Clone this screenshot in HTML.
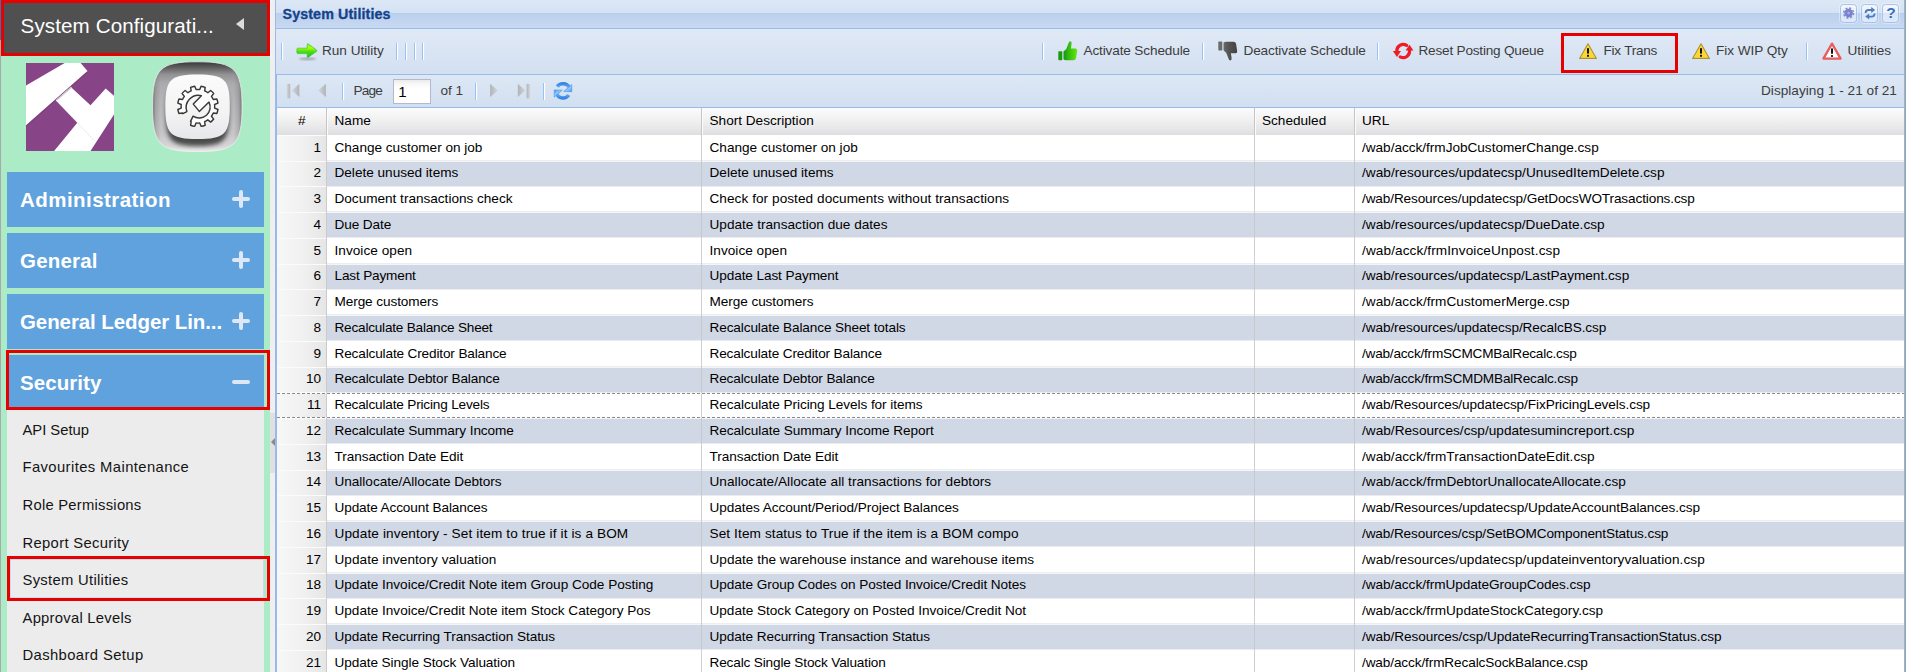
<!DOCTYPE html>
<html><head><meta charset="utf-8"><title>System Utilities</title>
<style>
*{box-sizing:border-box;margin:0;padding:0}
html,body{width:1906px;height:672px;overflow:hidden;background:#fff;font-family:"Liberation Sans",sans-serif}
#wrap{position:absolute;left:0;top:0;width:1906px;height:672px;overflow:hidden}
.abs{position:absolute}
/* ---------- sidebar ---------- */
#side{position:absolute;left:0;top:0;width:270px;height:672px;background:#abebc6}
#sideL{position:absolute;left:0;top:0;width:1px;height:672px;background:#a9a9a9}
#shead{position:absolute;left:1px;top:0;width:269px;height:56px;background:#505050;border:3px solid #e60000}
#shead .t{position:absolute;left:16.6px;top:10.5px;font-size:20.6px;color:#fff;white-space:nowrap;letter-spacing:0.1px}
#shead .arr{position:absolute;left:232px;top:15px;width:0;height:0;border-top:6.5px solid transparent;border-bottom:6.5px solid transparent;border-right:8.5px solid #dcdcdc}
.acc{position:absolute;left:7px;width:257px;height:55px;background:#5fa2dd;color:#fff;font-weight:bold;font-size:20.5px;white-space:nowrap}
.acc .t{position:absolute;left:13px;top:16px}
.acc .pl{position:absolute;left:225px;top:18px;width:18px;height:18px}
.acc .pl:before{content:"";position:absolute;left:0;top:7px;width:18px;height:4px;background:#dde7f5;border-radius:2px}
.acc .pl.p:after{content:"";position:absolute;left:7px;top:0;width:4px;height:17.5px;background:#dde7f5;border-radius:2px}
#sub{position:absolute;left:7px;top:410px;width:257px;height:262px;background:#ececec}
.mi{position:absolute;left:22.5px;height:37.5px;line-height:37.5px;font-size:14.8px;color:#141414;white-space:nowrap}
.redbox{position:absolute;border:3px solid #e60000}
/* ---------- splitter ---------- */
#split{position:absolute;left:270px;top:0;width:5px;height:672px;background:#efefef}
#mini{position:absolute;left:270px;top:413px;width:5px;height:60px;background:#e0e0e0}
#mini:after{content:"";position:absolute;left:0.5px;top:25px;width:0;height:0;border-top:4.5px solid transparent;border-bottom:4.5px solid transparent;border-right:4.5px solid #8a8a8a}
/* ---------- main panel ---------- */
#main{position:absolute;left:275px;top:0;width:1630px;height:672px;background:#fff}
#phead{position:absolute;left:276px;top:0;width:1628px;height:29px;background:linear-gradient(#dde8f6 0,#d4e2f4 12.5px,#b7cdec 13px,#bcd1ee 14.5px,#c8d9f1 28px);border-bottom:1px solid #99bbe8}
#phead .t{position:absolute;left:6.5px;top:6px;font-size:14.3px;font-weight:bold;color:#15428b;-webkit-text-stroke:.3px #15428b;white-space:nowrap;letter-spacing:0.1px}
.tool{position:absolute;top:4px;width:17.5px;height:18.5px;border:1px solid #a6c3ec;border-radius:3.5px;background:linear-gradient(#f3f7fd 0,#ecf2fb 48%,#dbe7f8 50%,#dfe9f8 100%);box-shadow:0 0 0 1px rgba(255,255,255,.35)}
#tbar{position:absolute;left:276px;top:29px;width:1628px;height:45.5px;background:linear-gradient(#e0e9f6,#d3e0f1);border-bottom:1px solid #99bbe8}
#pbar{position:absolute;left:276px;top:74.5px;width:1628px;height:33px;background:linear-gradient(#dee8f5,#d1dff0);border-bottom:1px solid #99bbe8}
.tt{position:absolute;font-size:13.6px;color:#3c3c3c;white-space:nowrap;line-height:16px}
.sep{position:absolute;width:3px;height:17px;background:linear-gradient(90deg,#96c2f7 0,#96c2f7 1px,#fff 1px,#fff 2px,rgba(255,255,255,.12) 2px)}
#ghead{position:absolute;left:277px;top:107.5px;width:1627px;height:27.5px;background:linear-gradient(#fbfbfb 0,#f2f2f3 40%,#e6e6e8 80%,#dededf 100%)}
#ghead span{position:absolute;top:5px;font-size:13.6px;color:#000;white-space:nowrap;line-height:16px}
.hsep{position:absolute;top:0;width:1px;height:27px;background:#c6c6c6;box-shadow:1px 0 0 #fbfbfb}
.row{position:absolute;left:277px;width:1627px;height:25.75px;font-size:13.6px;color:#000;white-space:nowrap}
.row .nbg{position:absolute;left:0;top:0;width:49.5px;height:26px;background:linear-gradient(90deg,#f7f7f7 0,#f0f0f0 55%,#e5e5e5 100%);border-top:1.2px solid #fbfbfb}
.band{position:absolute;left:326.5px;width:1577.5px;height:24px;background:#d0d7e5;box-shadow:0 -1px 0 #f4f5f8,0 -2px 0 #ededed,0 1px 0 #ececf0}
.dash{position:absolute;left:277px;width:1627px;height:1px;background:repeating-linear-gradient(90deg,#8a8a8a 0,#8a8a8a 3px,rgba(255,255,255,.6) 3px,rgba(255,255,255,.6) 5px);z-index:3}
.c{position:absolute;top:5px;line-height:16px}
.num{left:0;width:44px;text-align:right}
.nm{left:57.5px}.ds{left:432.5px}.ur{left:1085px}
#numcol{position:absolute;left:277px;top:135px;width:49.5px;height:537px;background:linear-gradient(90deg,#f6f6f6 0,#efefef 60%,#e4e4e4 100%)}
.vsep{position:absolute;top:135px;width:1px;height:537px;background:rgba(196,196,196,.8);z-index:2}
</style></head>
<body><div id="wrap">

<!-- main panel -->
<div id="main"></div><div class="abs" style="left:275px;top:0;width:1px;height:672px;background:#97baea"></div><div class="abs" style="left:276px;top:74px;width:1px;height:598px;background:#97baea;z-index:4"></div><div class="abs" style="left:1904px;top:0;width:1px;height:672px;background:#8fb3e4;z-index:4"></div><div class="abs" style="left:1905px;top:0;width:1px;height:672px;background:#a3a3a3"></div>
<div id="phead"><span class="t">System Utilities</span>
 <div class="tool" style="left:1563.5px;width:17px"><svg width="17" height="18" viewBox="0 0 17 18" style="position:absolute;left:-1px;top:-1px"><circle cx="8.6" cy="9" r="4.9" fill="none" stroke="#8088d2" stroke-width="1.6" stroke-dasharray="2 1.85"/><circle cx="8.6" cy="9" r="4.3" fill="#7b83cf"/><circle cx="8.6" cy="9" r="1.2" fill="#aab0e4"/></svg></div><div class="tool" style="left:1584.5px;width:17.7px"><svg width="18" height="18" viewBox="0 0 18 18" style="position:absolute;left:-1px;top:-1px"><g fill="none" stroke="#4b7cc2" stroke-width="1.9"><path d="M4.6 9 Q4.6 6 7.6 6 L11 6"/><path d="M13.6 9.4 Q13.6 12.6 10.6 12.6 L7.4 12.6"/></g><path d="M10.2 3 L14.2 6 L10.2 9Z" fill="#4b7cc2"/><path d="M8.2 9.6 L4.2 12.6 L8.2 15.6Z" fill="#4b7cc2"/></svg></div><div class="tool" style="left:1605.8px;width:17.6px"><span style="position:absolute;left:3.4px;top:-0.8px;font-size:15.5px;font-weight:bold;color:#3b6ebe;line-height:17px">?</span></div>
</div>
<div id="tbar"></div>
<div id="pbar"></div>
<div id="ghead">
 <span style="left:21px">#</span><span style="left:57.5px">Name</span><span style="left:432.5px">Short Description</span><span style="left:985px">Scheduled</span><span style="left:1085px">URL</span>
 <div class="hsep" style="left:49px"></div><div class="hsep" style="left:424px"></div><div class="hsep" style="left:977px"></div><div class="hsep" style="left:1077px"></div>
</div>
<div id="numcol"></div>
<div class="row" style="top:135px"><div class="nbg" style="top:0px"></div><span class="c num">1</span><span class="c nm" style="letter-spacing:-0.01px">Change customer on job</span><span class="c ds" style="letter-spacing:0.008px">Change customer on job</span><span class="c ur" style="letter-spacing:-0.016px">/wab/acck/frmJobCustomerChange.csp</span></div>
<div class="band" style="top:162px"></div>
<div class="row" style="top:160px"><div class="nbg" style="top:1px"></div><span class="c num">2</span><span class="c nm" style="letter-spacing:-0.007px">Delete unused items</span><span class="c ds" style="letter-spacing:0.009px">Delete unused items</span><span class="c ur" style="letter-spacing:0.058px">/wab/resources/updatecsp/UnusedItemDelete.csp</span></div>
<div class="row" style="top:186px"><div class="nbg" style="top:0px"></div><span class="c num">3</span><span class="c nm" style="letter-spacing:-0.012px">Document transactions check</span><span class="c ds" style="letter-spacing:0.058px">Check for posted documents without transactions</span><span class="c ur" style="letter-spacing:-0.123px">/wab/Resources/updatecsp/GetDocsWOTrasactions.csp</span></div>
<div class="band" style="top:213px"></div>
<div class="row" style="top:212px"><div class="nbg" style="top:0px"></div><span class="c num">4</span><span class="c nm" style="letter-spacing:-0.092px">Due Date</span><span class="c ds" style="letter-spacing:0.014px">Update transaction due dates</span><span class="c ur" style="letter-spacing:0.046px">/wab/resources/updatecsp/DueDate.csp</span></div>
<div class="row" style="top:238px"><div class="nbg" style="top:0px"></div><span class="c num">5</span><span class="c nm" style="letter-spacing:0.042px">Invoice open</span><span class="c ds" style="letter-spacing:0.034px">Invoice open</span><span class="c ur" style="letter-spacing:0.106px">/wab/acck/frmInvoiceUnpost.csp</span></div>
<div class="band" style="top:265px"></div>
<div class="row" style="top:263px"><div class="nbg" style="top:1px"></div><span class="c num">6</span><span class="c nm" style="letter-spacing:-0.16px">Last Payment</span><span class="c ds" style="letter-spacing:-0.091px">Update Last Payment</span><span class="c ur" style="letter-spacing:0.012px">/wab/resources/updatecsp/LastPayment.csp</span></div>
<div class="row" style="top:289px"><div class="nbg" style="top:0px"></div><span class="c num">7</span><span class="c nm" style="letter-spacing:-0.088px">Merge customers</span><span class="c ds" style="letter-spacing:-0.068px">Merge customers</span><span class="c ur" style="letter-spacing:0.049px">/wab/acck/frmCustomerMerge.csp</span></div>
<div class="band" style="top:316px"></div>
<div class="row" style="top:315px"><div class="nbg" style="top:0px"></div><span class="c num">8</span><span class="c nm" style="letter-spacing:-0.213px">Recalculate Balance Sheet</span><span class="c ds" style="letter-spacing:-0.109px">Recalculate Balance Sheet totals</span><span class="c ur" style="letter-spacing:-0.075px">/wab/resources/updatecsp/RecalcBS.csp</span></div>
<div class="row" style="top:341px"><div class="nbg" style="top:0px"></div><span class="c num">9</span><span class="c nm" style="letter-spacing:-0.145px">Recalculate Creditor Balance</span><span class="c ds" style="letter-spacing:-0.134px">Recalculate Creditor Balance</span><span class="c ur" style="letter-spacing:-0.217px">/wab/acck/frmSCMCMBalRecalc.csp</span></div>
<div class="band" style="top:368px"></div>
<div class="row" style="top:366px"><div class="nbg" style="top:1px"></div><span class="c num">10</span><span class="c nm" style="letter-spacing:-0.128px">Recalculate Debtor Balance</span><span class="c ds" style="letter-spacing:-0.131px">Recalculate Debtor Balance</span><span class="c ur" style="letter-spacing:-0.178px">/wab/acck/frmSCMDMBalRecalc.csp</span></div>
<div class="row" style="top:392px"><div class="nbg" style="top:0px"></div><span class="c num">11</span><span class="c nm" style="letter-spacing:-0.171px">Recalculate Pricing Levels</span><span class="c ds" style="letter-spacing:-0.067px">Recalculate Pricing Levels for items</span><span class="c ur" style="letter-spacing:-0.079px">/wab/Resources/updatecsp/FixPricingLevels.csp</span></div>
<div class="band" style="top:419px"></div>
<div class="row" style="top:418px"><div class="nbg" style="top:0px"></div><span class="c num">12</span><span class="c nm" style="letter-spacing:-0.078px">Recalculate Summary Income</span><span class="c ds" style="letter-spacing:-0.052px">Recalculate Summary Income Report</span><span class="c ur" style="letter-spacing:0.028px">/wab/Resources/csp/updatesumincreport.csp</span></div>
<div class="row" style="top:444px"><div class="nbg" style="top:0px"></div><span class="c num">13</span><span class="c nm" style="letter-spacing:-0.072px">Transaction Date Edit</span><span class="c ds" style="letter-spacing:-0.072px">Transaction Date Edit</span><span class="c ur" style="letter-spacing:0.035px">/wab/acck/frmTransactionDateEdit.csp</span></div>
<div class="band" style="top:471px"></div>
<div class="row" style="top:469px"><div class="nbg" style="top:1px"></div><span class="c num">14</span><span class="c nm" style="letter-spacing:-0.024px">Unallocate/Allocate Debtors</span><span class="c ds" style="letter-spacing:0.044px">Unallocate/Allocate all transactions for debtors</span><span class="c ur" style="letter-spacing:0.042px">/wab/acck/frmDebtorUnallocateAllocate.csp</span></div>
<div class="row" style="top:495px"><div class="nbg" style="top:0px"></div><span class="c num">15</span><span class="c nm" style="letter-spacing:-0.117px">Update Account Balances</span><span class="c ds" style="letter-spacing:-0.06px">Updates Account/Period/Project Balances</span><span class="c ur" style="letter-spacing:-0.073px">/wab/Resources/updatecsp/UpdateAccountBalances.csp</span></div>
<div class="band" style="top:522px"></div>
<div class="row" style="top:521px"><div class="nbg" style="top:0px"></div><span class="c num">16</span><span class="c nm" style="letter-spacing:0.119px">Update inventory - Set item to true if it is a BOM</span><span class="c ds" style="letter-spacing:0.11px">Set Item status to True if the item is a BOM compo</span><span class="c ur" style="letter-spacing:-0.114px">/wab/Resources/csp/SetBOMComponentStatus.csp</span></div>
<div class="row" style="top:547px"><div class="nbg" style="top:0px"></div><span class="c num">17</span><span class="c nm" style="letter-spacing:0.036px">Update inventory valuation</span><span class="c ds" style="letter-spacing:0.008px">Update the warehouse instance and warehouse items</span><span class="c ur" style="letter-spacing:0.08px">/wab/resources/updatecsp/updateinventoryvaluation.csp</span></div>
<div class="band" style="top:574px"></div>
<div class="row" style="top:572px"><div class="nbg" style="top:1px"></div><span class="c num">18</span><span class="c nm" style="letter-spacing:-0.015px">Update Invoice/Credit Note item Group Code Posting</span><span class="c ds" style="letter-spacing:-0.064px">Update Group Codes on Posted Invoice/Credit Notes</span><span class="c ur" style="letter-spacing:-0.033px">/wab/acck/frmUpdateGroupCodes.csp</span></div>
<div class="row" style="top:598px"><div class="nbg" style="top:0px"></div><span class="c num">19</span><span class="c nm" style="letter-spacing:-0.01px">Update Invoice/Credit Note item Stock Category Pos</span><span class="c ds" style="letter-spacing:-0.017px">Update Stock Category on Posted Invoice/Credit Not</span><span class="c ur" style="letter-spacing:0.012px">/wab/acck/frmUpdateStockCategory.csp</span></div>
<div class="band" style="top:625px"></div>
<div class="row" style="top:624px"><div class="nbg" style="top:0px"></div><span class="c num">20</span><span class="c nm" style="letter-spacing:-0.066px">Update Recurring Transaction Status</span><span class="c ds" style="letter-spacing:-0.066px">Update Recurring Transaction Status</span><span class="c ur" style="letter-spacing:-0.064px">/wab/Resources/csp/UpdateRecurringTransactionStatus.csp</span></div>
<div class="row" style="top:650px"><div class="nbg" style="top:0px"></div><span class="c num">21</span><span class="c nm" style="letter-spacing:-0.074px">Update Single Stock Valuation</span><span class="c ds" style="letter-spacing:-0.146px">Recalc Single Stock Valuation</span><span class="c ur" style="letter-spacing:-0.114px">/wab/acck/frmRecalcSockBalance.csp</span></div>
<div class="dash" style="top:393px"></div><div class="dash" style="top:417px"></div>
<div class="vsep" style="left:326px"></div><div class="vsep" style="left:701px"></div><div class="vsep" style="left:1254px"></div><div class="vsep" style="left:1354px"></div>

<!-- toolbar items -->
<div class="sep" style="left:281px;top:43px"></div>
<div class="tt" style="left:322px;top:43px;letter-spacing:-0.02px">Run Utility</div>
<div class="sep" style="left:396px;top:43px"></div><div class="sep" style="left:405px;top:43px"></div><div class="sep" style="left:414px;top:43px"></div><div class="sep" style="left:422px;top:43px"></div>
<div class="sep" style="left:1042px;top:43px"></div>
<div class="tt" style="left:1083.5px;top:43px;letter-spacing:-0.14px">Activate Schedule</div>
<div class="sep" style="left:1202px;top:43px"></div>
<div class="tt" style="left:1243.5px;top:43px;letter-spacing:-0.13px">Deactivate Schedule</div>
<div class="sep" style="left:1377px;top:43px"></div>
<div class="tt" style="left:1418.5px;top:43px;letter-spacing:-0.21px">Reset Posting Queue</div>
<div class="tt" style="left:1603.5px;top:43px;letter-spacing:-0.25px">Fix Trans</div>
<div class="tt" style="left:1716px;top:43px;letter-spacing:-0.04px">Fix WIP Qty</div>
<div class="sep" style="left:1806px;top:43px"></div>
<div class="tt" style="left:1847.5px;top:43px;letter-spacing:-0.03px">Utilities</div>
<div class="redbox" style="left:1561px;top:33px;width:117px;height:40px"></div>

<!-- run utility arrow -->
<svg class="abs" style="left:296px;top:42px" width="23" height="19" viewBox="0 0 23 19">
<defs><linearGradient id="ga" x1="0" y1="0" x2="0" y2="1"><stop offset="0" stop-color="#7cf21a"/><stop offset=".3" stop-color="#b0ff00"/><stop offset=".55" stop-color="#4fe018"/><stop offset="1" stop-color="#22bb22"/></linearGradient>
<filter id="gab"><feGaussianBlur stdDeviation="0.8"/></filter></defs>
<ellipse cx="11.5" cy="16.8" rx="8.5" ry="1.1" fill="#555" opacity=".55" filter="url(#gab)"/>
<path d="M1.6 6.2 L11.2 6.2 L11.2 2.2 Q11.6 1.4 12.4 2 L20.6 8 Q21.2 8.7 20.6 9.3 L12.4 15.2 Q11.5 15.7 11.2 15 L11.2 11.6 L1.6 11.6 Q0.9 11.4 0.9 10.7 L0.9 7.1 Q0.9 6.4 1.6 6.2Z" fill="url(#ga)" stroke="#35c935" stroke-width=".7"/>
</svg>
<!-- thumbs up -->
<svg class="abs" style="left:1058px;top:41px" width="20" height="20" viewBox="0 0 20 20">
<defs><linearGradient id="gu" x1="0" y1="0" x2="1" y2="0"><stop offset="0" stop-color="#16960f"/><stop offset=".35" stop-color="#2fba12"/><stop offset="1" stop-color="#66e612"/></linearGradient></defs>
<rect x=".3" y="10.2" width="4" height="9" rx=".8" fill="#1a9a10"/>
<path d="M5.5 10.6 L8.3 8 L10.4 2.6 Q10.9 .3 12.3 .3 Q13.9 .6 13.6 2.8 L12.9 7.6 L17.6 7.6 Q19.5 7.9 19.2 9.7 L18 17.3 Q17.5 19.2 15.6 19.2 L8.2 19.2 Q6.5 19 5.5 18.2Z" fill="url(#gu)"/>
</svg>
<!-- thumbs down -->
<svg class="abs" style="left:1218px;top:41px" width="20" height="20" viewBox="0 0 20 20">
<defs><linearGradient id="gd" x1="0" y1="0" x2="1" y2="0"><stop offset="0" stop-color="#6a6a6a"/><stop offset=".35" stop-color="#555"/><stop offset="1" stop-color="#444"/></linearGradient></defs>
<g transform="translate(0,19.9) scale(1,-1)">
<rect x=".3" y="10.4" width="4" height="9" rx=".8" fill="#6b6b6b"/>
<path d="M5.5 10.6 L8.3 8 L10.4 2.6 Q10.9 .3 12.3 .3 Q13.9 .6 13.6 2.8 L12.9 7.6 L17.6 7.6 Q19.5 7.9 19.2 9.7 L18 17.3 Q17.5 19.2 15.6 19.2 L8.2 19.2 Q6.5 19 5.5 18.2Z" fill="url(#gd)"/>
</g></svg>
<!-- reset (red arrows) -->
<svg class="abs" style="left:1392px;top:42px" width="22" height="18" viewBox="0 0 22 18">
<g fill="none" stroke="#ee1c25" stroke-width="3.2" stroke-linecap="round">
<path d="M14.6 3.3 A6.4 6.4 0 0 0 4.9 9.4"/>
<path d="M8.2 14.9 A6.4 6.4 0 0 0 17.5 8.4"/>
</g>
<path d="M0.9 9 L9 9 L5 14.9Z" fill="#ee1c25"/>
<path d="M13.5 8.6 L21.5 8.6 L17.5 2.7Z" fill="#ee1c25"/>
</svg>
<!-- warnings -->
<svg class="abs" style="left:1578px;top:42px" width="20" height="18" viewBox="0 0 20 18"><path d="M10 1.8 L18.4 16.4 L1.6 16.4Z" fill="#fdd22a" stroke="#a8923a" stroke-width="1.1" stroke-linejoin="round"/><path d="M10 3.4 L17 15.6 L3 15.6Z" fill="#ffdb3c" opacity=".6"/><rect x="9" y="6" width="2" height="5.8" rx=".8" fill="#111"/><rect x="9" y="12.8" width="2" height="2" rx=".6" fill="#111"/></svg>
<svg class="abs" style="left:1691px;top:42px" width="20" height="18" viewBox="0 0 20 18"><path d="M10 1.8 L18.4 16.4 L1.6 16.4Z" fill="#fdd22a" stroke="#a8923a" stroke-width="1.1" stroke-linejoin="round"/><path d="M10 3.4 L17 15.6 L3 15.6Z" fill="#ffdb3c" opacity=".6"/><rect x="9" y="6" width="2" height="5.8" rx=".8" fill="#111"/><rect x="9" y="12.8" width="2" height="2" rx=".6" fill="#111"/></svg>
<svg class="abs" style="left:1821px;top:41px" width="22" height="20" viewBox="0 0 22 20">
<path d="M11 2.6 L19.6 17.6 L2.4 17.6Z" fill="#fff" stroke="#e85c5c" stroke-width="2.3" stroke-linejoin="round"/>
<rect x="10" y="7.3" width="2" height="5.6" rx=".8" fill="#111"/><rect x="10" y="14" width="2" height="1.9" rx=".6" fill="#111"/>
</svg>

<!-- paging icons -->
<svg class="abs" style="left:286px;top:83px" width="15" height="16" viewBox="0 0 15 16">
<defs><linearGradient id="gp" x1="0" y1="0" x2="1" y2="0"><stop offset="0" stop-color="#d3d6da"/><stop offset="1" stop-color="#b0b3b7"/></linearGradient>
<linearGradient id="gp2" x1="1" y1="0" x2="0" y2="0"><stop offset="0" stop-color="#d3d6da"/><stop offset="1" stop-color="#b0b3b7"/></linearGradient></defs>
<rect x=".8" y=".9" width="3.4" height="14.5" fill="url(#gp)"/><path d="M13.4 .7 L13.4 14.1 L5.9 7.4Z" fill="url(#gp)"/></svg>
<svg class="abs" style="left:317px;top:83px" width="10" height="16" viewBox="0 0 10 16"><path d="M8.9 .7 L8.9 14.1 L1.2 7.4Z" fill="url(#gp)"/></svg>
<svg class="abs" style="left:489px;top:83px" width="10" height="16" viewBox="0 0 10 16"><path d="M1.1 .7 L1.1 14.1 L8.9 7.4Z" fill="url(#gp2)"/></svg>
<svg class="abs" style="left:517px;top:83px" width="15" height="16" viewBox="0 0 15 16"><path d="M.8 .7 L.8 14.1 L8.4 7.4Z" fill="url(#gp2)"/><rect x="9.6" y=".9" width="3.4" height="14.5" fill="url(#gp2)"/></svg>
<!-- refresh -->
<svg class="abs" style="left:548px;top:76px" width="32" height="30" viewBox="0 0 32 30">
<defs><linearGradient id="gr" x1="0" y1="0" x2="0" y2="1"><stop offset="0" stop-color="#3585e4"/><stop offset="1" stop-color="#63acf4"/></linearGradient>
<linearGradient id="gr2" x1="0" y1="1" x2="0" y2="0"><stop offset="0" stop-color="#3585e4"/><stop offset="1" stop-color="#63acf4"/></linearGradient>
<linearGradient id="gr3" x1="0" y1="0" x2="1" y2="1"><stop offset="0" stop-color="#2f7fe2"/><stop offset=".6" stop-color="#8fc6fb"/><stop offset="1" stop-color="#4a96ec"/></linearGradient>
<linearGradient id="gr4" x1="1" y1="1" x2="0" y2="0"><stop offset="0" stop-color="#2f7fe2"/><stop offset=".6" stop-color="#8fc6fb"/><stop offset="1" stop-color="#4a96ec"/></linearGradient></defs>
<path d="M9.2 10.6 A7.2 7.2 0 0 1 21.2 11.2" fill="none" stroke="url(#gr)" stroke-width="3.5"/>
<path d="M20.8 19 A7.2 7.2 0 0 1 8.8 18.4" fill="none" stroke="url(#gr2)" stroke-width="3.5"/>
<path d="M23.8 8.6 L23.8 15.7 L15.6 15.5Z" fill="url(#gr3)" stroke="#3a8ae8" stroke-width=".5"/>
<path d="M6.2 21.2 L6.2 13.9 L14.4 14.1Z" fill="url(#gr4)" stroke="#3a8ae8" stroke-width=".5"/>
</svg>

<!-- paging -->
<div class="sep" style="left:342px;top:83px"></div>
<div class="tt" style="left:353.5px;top:83px;letter-spacing:-0.84px">Page</div>
<div class="abs" style="left:393px;top:79px;width:38px;height:24.5px;background:linear-gradient(#ebebeb 0,#f8f8f8 4px,#fff 9px);border:1px solid #b5b8c8"></div>
<div class="tt" style="left:398.3px;top:83px;color:#000;font-size:15px;line-height:17px">1</div>
<div class="tt" style="left:440.5px;top:83px">of 1</div>
<div class="sep" style="left:475px;top:83px"></div>
<div class="sep" style="left:543px;top:83px"></div>
<div class="tt" style="left:1761px;top:83px;letter-spacing:0.03px">Displaying 1 - 21 of 21</div>

<!-- splitter -->
<div id="split"></div><div class="abs" style="left:270px;top:0;width:1px;height:57px;background:#f8fdfd"></div><div id="mini"></div>

<!-- sidebar -->
<div id="side">
 <div id="sideL"></div><div class="abs" style="left:0;top:0;width:1px;height:40px;background:#2d76b4"></div>
<svg class="abs" style="left:0;top:0" width="270" height="170" viewBox="0 0 270 170">
<defs>
<linearGradient id="gbO" x1="0" y1="0" x2="0" y2="1"><stop offset="0" stop-color="#383838"/><stop offset=".06" stop-color="#5c5c5c"/><stop offset=".14" stop-color="#929295"/><stop offset=".24" stop-color="#ababae"/><stop offset=".5" stop-color="#b9b9bc"/><stop offset=".8" stop-color="#c6c6c8"/><stop offset=".94" stop-color="#d6d6d8"/><stop offset="1" stop-color="#ececec"/></linearGradient>
<linearGradient id="gbS" x1="0" y1="0" x2="1" y2="0"><stop offset="0" stop-color="#2a2a2a" stop-opacity=".5"/><stop offset=".035" stop-color="#2a2a2a" stop-opacity=".15"/><stop offset=".09" stop-color="#2a2a2a" stop-opacity="0"/><stop offset=".91" stop-color="#2a2a2a" stop-opacity="0"/><stop offset=".965" stop-color="#2a2a2a" stop-opacity=".15"/><stop offset="1" stop-color="#2a2a2a" stop-opacity=".5"/></linearGradient>
<linearGradient id="gbI" x1="0" y1="0" x2="0" y2="1"><stop offset="0" stop-color="#fcfbfc"/><stop offset=".6" stop-color="#f3f3f4"/><stop offset="1" stop-color="#e6e7e9"/></linearGradient>
<filter id="gbB" x="-30%" y="-30%" width="160%" height="160%"><feGaussianBlur stdDeviation="2"/></filter>
<clipPath id="gbC"><path d="M152.6 106.69999999999999 C152.6 68.8 159.6 61.8 197.3 61.8 C235 61.8 242 68.8 242 106.69999999999999 C242 144.6 235 151.6 197.3 151.6 C159.6 151.6 152.6 144.6 152.6 106.69999999999999Z"/></clipPath>
</defs>
<path d="M152.6 106.69999999999999 C152.6 68.8 159.6 61.8 197.3 61.8 C235 61.8 242 68.8 242 106.69999999999999 C242 144.6 235 151.6 197.3 151.6 C159.6 151.6 152.6 144.6 152.6 106.69999999999999Z" fill="url(#gbO)"/>
<path d="M152.6 106.69999999999999 C152.6 68.8 159.6 61.8 197.3 61.8 C235 61.8 242 68.8 242 106.69999999999999 C242 144.6 235 151.6 197.3 151.6 C159.6 151.6 152.6 144.6 152.6 106.69999999999999Z" fill="url(#gbS)"/>
<g clip-path="url(#gbC)"><path d="M166 114.0 C166 87 171 82 197.5 82 C224 82 229 87 229 114.0 C229 141 224 146 197.5 146 C171 146 166 141 166 114.0Z" fill="#2b2b2b" opacity=".8" filter="url(#gbB)"/></g>
<path d="M152.6 106.69999999999999 C152.6 68.8 159.6 61.8 197.3 61.8 C235 61.8 242 68.8 242 106.69999999999999 C242 144.6 235 151.6 197.3 151.6 C159.6 151.6 152.6 144.6 152.6 106.69999999999999Z" fill="none" stroke="#f2f2f2" stroke-opacity=".75" stroke-width="1"/>
<path d="M165.3 106.7 C165.3 79.4 170.3 74.4 197.55 74.4 C224.8 74.4 229.8 79.4 229.8 106.7 C229.8 134 224.8 139 197.55 139 C170.3 139 165.3 134 165.3 106.7Z" fill="url(#gbI)"/>
<path d="M182.80 113.66 A16.80 16.80 0 0 1 182.52 113.05 L178.95 113.57 A20.30 20.30 0 0 1 177.85 109.48 L181.20 108.14 A16.80 16.80 0 0 1 181.20 104.46 L177.85 103.12 A20.30 20.30 0 0 1 178.95 99.03 L182.52 99.55 A16.80 16.80 0 0 1 184.36 96.35 L182.12 93.52 A20.30 20.30 0 0 1 185.12 90.52 L187.95 92.76 A16.80 16.80 0 0 1 191.15 90.92 L190.63 87.35 A20.30 20.30 0 0 1 194.72 86.25 L196.06 89.60 A16.80 16.80 0 0 1 199.74 89.60 L201.08 86.25 A20.30 20.30 0 0 1 205.17 87.35 L204.65 90.92 A16.80 16.80 0 0 1 207.85 92.76 L210.68 90.52 A20.30 20.30 0 0 1 213.68 93.52 L211.44 96.35 A16.80 16.80 0 0 1 213.28 99.55 L216.85 99.03 A20.30 20.30 0 0 1 217.95 103.12 L214.60 104.46 A16.80 16.80 0 0 1 214.60 108.14 L217.95 109.48 A20.30 20.30 0 0 1 216.85 113.57 L213.28 113.05 A16.80 16.80 0 0 1 211.44 116.25 L213.68 119.08 A20.30 20.30 0 0 1 210.68 122.08 L207.85 119.84 A16.80 16.80 0 0 1 204.65 121.68 L205.17 125.25 A20.30 20.30 0 0 1 201.08 126.35 L199.74 123.00 A16.80 16.80 0 0 1 196.06 123.00 L194.72 126.35 A20.30 20.30 0 0 1 190.63 125.25 L191.15 121.68 A16.80 16.80 0 0 1 190.54 121.40 L193.08 116.19 A11.0 11.0 0 0 0 209.00 102.10 L199.30 111.40 L193.30 104.10 L201.40 95.70 A12.3 12.3 0 0 0 186.84 111.69 Z" fill="#fdfdfd" stroke="#383838" stroke-width="1.45" stroke-linejoin="round"/>
</svg>
<svg class="abs" style="left:26px;top:63px" width="88" height="88" viewBox="0 0 88 87.5" preserveAspectRatio="none">
<rect width="88" height="87.5" fill="#874487"/>
<polygon points="29.6,37 44.8,23.8 64.5,42 79.7,25.3 88,32.5 88,51.1 64.5,87.5 28.1,87.5 51.3,59.5" fill="#fff"/>
<polygon points="0,23.8 38.7,1.5 54.6,1.5 61.5,9.4 0,63.3" fill="#5d2a5e" opacity=".35"/>
<polygon points="0,22.3 38.7,0 54.6,0 61.5,7.9 0,61.8" fill="#fff"/>
<line x1="31" y1="36.5" x2="45.5" y2="24" stroke="#c9c9c9" stroke-width="1.4"/>
<line x1="51.5" y1="59.5" x2="69" y2="78" stroke="#e6e6e6" stroke-width="0.8"/>
</svg>
 <div id="shead"><span class="t">System Configurati...</span><div class="arr"></div></div>
 <div class="acc" style="top:172px"><span class="t" style="letter-spacing:0.45px">Administration</span><div class="pl p"></div></div>
 <div class="acc" style="top:233px"><span class="t" style="letter-spacing:0.19px">General</span><div class="pl p"></div></div>
 <div class="acc" style="top:294px"><span class="t" style="letter-spacing:-0.09px">General Ledger Lin...</span><div class="pl p"></div></div>
 <div class="acc" style="top:355px"><span class="t" style="letter-spacing:0.06px">Security</span><div class="pl"></div></div>
 <div id="sub"></div>
 <div class="mi" style="top:411.8px;letter-spacing:-0.03px">API Setup</div>
<div class="mi" style="top:449.4px;letter-spacing:0.4px">Favourites Maintenance</div>
<div class="mi" style="top:487.0px;letter-spacing:0.24px">Role Permissions</div>
<div class="mi" style="top:524.6px;letter-spacing:0.32px">Report Security</div>
<div class="mi" style="top:562.2px;letter-spacing:0.3px">System Utilities</div>
<div class="mi" style="top:599.8px;letter-spacing:0.26px">Approval Levels</div>
<div class="mi" style="top:637.4px;letter-spacing:0.39px">Dashboard Setup</div>
 <div class="redbox" style="left:6px;top:350px;width:264px;height:60px"></div>
 <div class="abs" style="left:10px;top:559px;width:254px;height:39px;border:1px solid #cddaec"></div>
 <div class="redbox" style="left:7px;top:556px;width:263px;height:45px"></div>
</div>

</div></body></html>
